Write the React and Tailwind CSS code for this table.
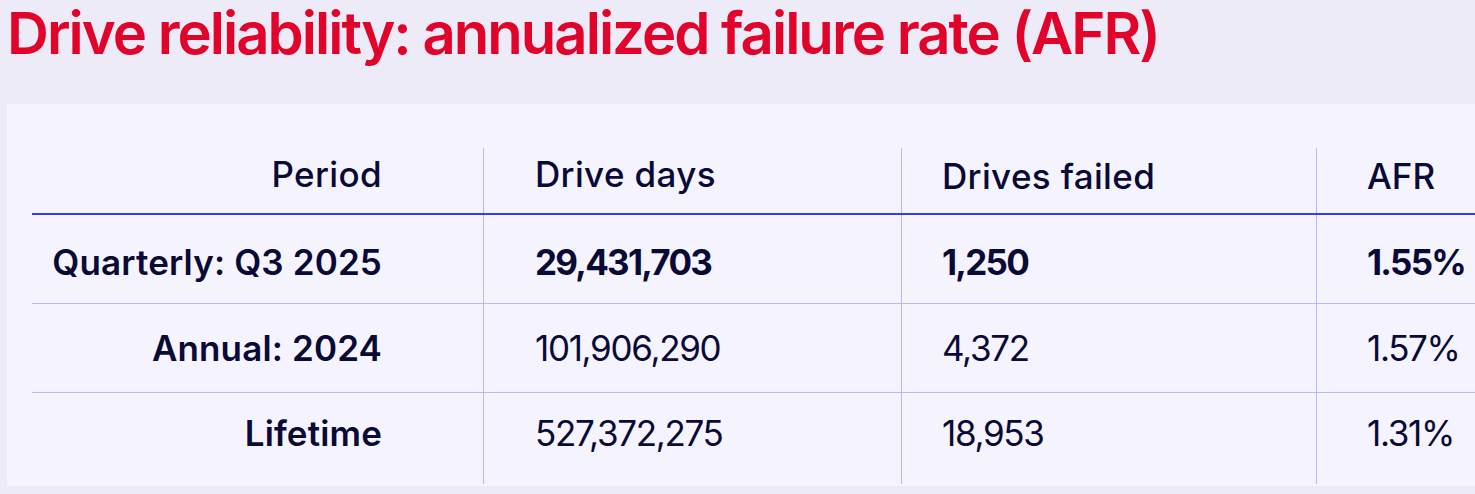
import React from 'react';

const rows = [
  { period: 'Quarterly: Q3 2025', days: '29,431,703', failed: '1,250', afr: '1.55%', bold: true, pt: 'pt-[30px]', h: 'h-[89px]' },
  { period: 'Annual: 2024', days: '101,906,290', failed: '4,372', afr: '1.57%', pt: 'pt-[27px]', h: 'h-[89px]' },
  { period: 'Lifetime', days: '527,372,275', failed: '18,953', afr: '1.31%', pt: 'pt-[23px]', h: 'h-[91px]' },
];

export default function App() {
  return (
    <div className="w-[1475px] h-[494px] overflow-hidden bg-[#ECEBF7] font-['Inter',sans-serif] text-[#0A0A36]">
      {/* Titre */}
      <h1 className="pl-[7px] text-[58px] leading-[66px] font-semibold tracking-[-0.034em] text-[#E2032B]">
        Drive reliability: annualized failure rate (AFR)
      </h1>

      {/* Panneau du tableau */}
      <div className="mt-[38px] ml-[7px] h-[382px] bg-[#F5F4FE] pl-[25px] pt-[44px]">
        <div className="text-[35px] leading-[35px]">
          {/* En-tête */}
          <div className="grid grid-cols-[451px_418px_415px_1fr] h-[67px] border-b-2 border-[#3A3AF2] font-medium tracking-[0.01em]">
            <div className="pt-[9px] pr-[101px] text-right">Period</div>
            <div className="pt-[9px] pl-[51px] border-l border-[#B7B7FB]">Drive days</div>
            <div className="pt-[11px] pl-[40px] border-l border-[#B7B7FB]">Drives failed</div>
            <div className="pt-[11px] pl-[50px] border-l border-[#B7B7FB] tracking-[0em]">AFR</div>
          </div>

          {rows.map((r, i) => {
            const num = r.bold ? 'font-bold tracking-[-0.05em]' : 'font-normal tracking-[-0.038em]';
            return (
              <div
                key={r.period}
                className={`grid grid-cols-[451px_418px_415px_1fr] ${r.h} ${i < rows.length - 1 ? 'border-b border-[#B7B7FB]' : ''}`}
              >
                <div className={`${r.pt} pr-[101px] text-right font-semibold tracking-[0.004em]`}>{r.period}</div>
                <div className={`${r.pt} pl-[51px] border-l border-[#B7B7FB] ${num}`}>{r.days}</div>
                <div className={`${r.pt} pl-[40px] border-l border-[#B7B7FB] ${num}`}>{r.failed}</div>
                <div className={`${r.pt} pl-[50px] border-l border-[#B7B7FB] ${num}`}>{r.afr}</div>
              </div>
            );
          })}
        </div>
      </div>
    </div>
  );
}
